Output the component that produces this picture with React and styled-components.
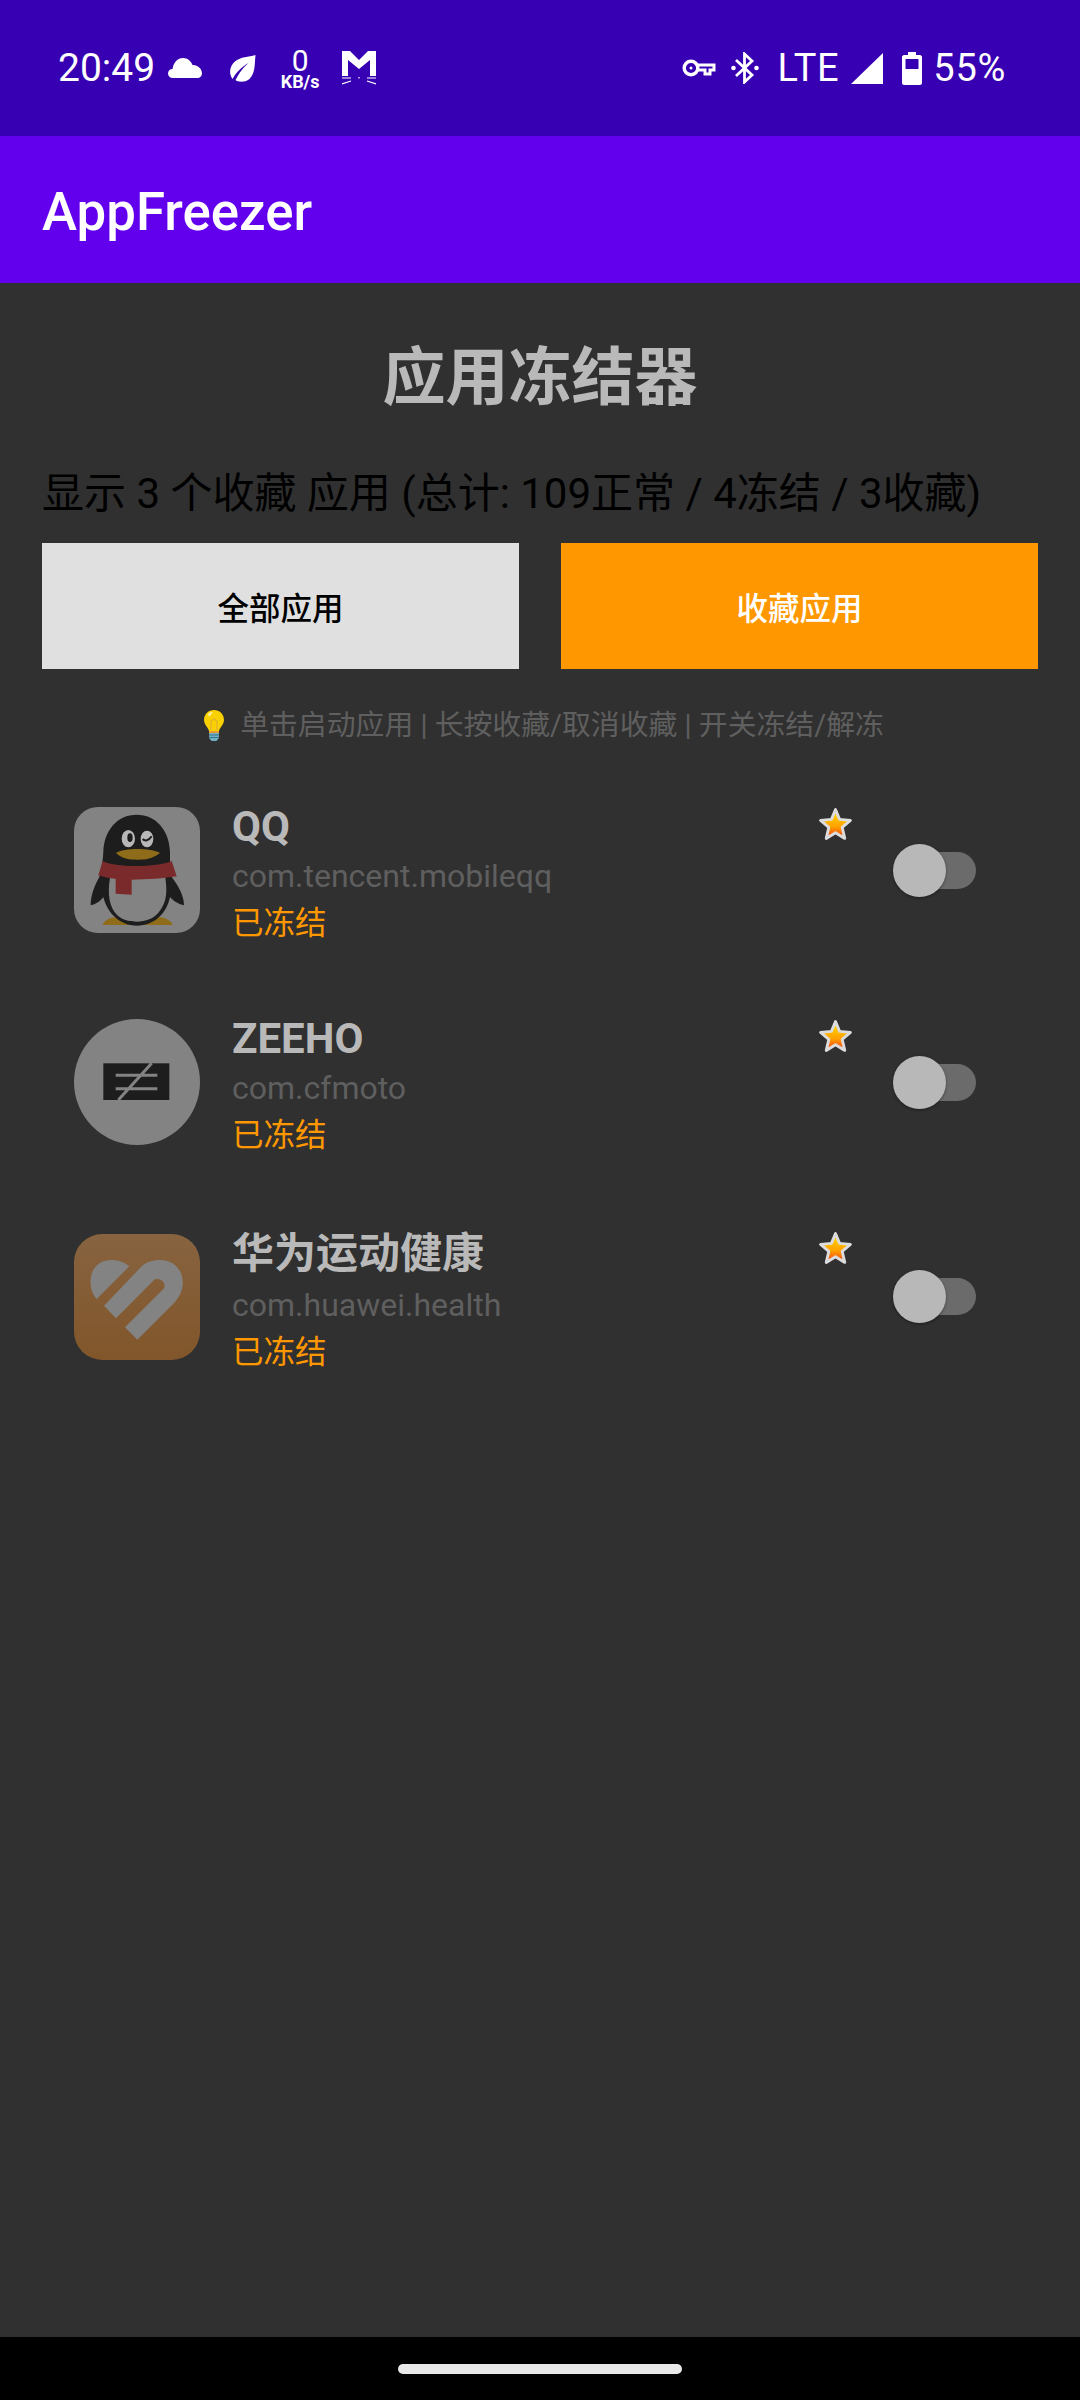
import styled, { createGlobalStyle } from 'styled-components';

const GlobalStyle = createGlobalStyle`
    html, body {
        margin: 0;
        padding: 0;
        background: #303030;
    }
    * {
        box-sizing: border-box;
    }
`;

const FONT = `Roboto, "Noto Sans CJK SC", sans-serif`;

const apps = [
    { name: 'QQ', pkg: 'com.tencent.mobileqq', icon: 'qq' },
    { name: 'ZEEHO', pkg: 'com.cfmoto', icon: 'zeeho' },
    { name: '华为运动健康', pkg: 'com.huawei.health', icon: 'health', tall: true },
];

const Cloud = () => (
    <svg width="34" height="20" viewBox="0 0 34 20">
        <path fill="#fff" d="M5 20C2 20 0 18 0 15.500C0 12.800 2 11 4.500 11C5.500 4.500 9.500 0 15 0C19.500 0 23 2.800 24.500 7C25 7 26 7 26.500 7.200C30.500 7.800 34 11 34 15.500C34 18 32 20 29.500 20Z" />
    </svg>
);

const Leaf = () => (
    <svg width="27" height="27" viewBox="0 0 26 27">
        <path fill="#fff" d="M26 0C25 9 26 18 20 24C15 28 8 27 6 25C10 18 13 13 19 8C12 12 7 17 3 24C-1 18 0 11 6 6C11 2 19 2 26 0Z" />
    </svg>
);

const CatMail = () => (
    <svg width="34" height="34" viewBox="0 0 34 34">
        <path fill="#fff" d="M0 0H8L17 9L26 0H34V25H28V9L17 18L6 9V25H0Z" />
        <path stroke="#fff" strokeWidth="1.200" fill="none" d="M0 27H9M0 33L9 30M25 27H34M25 30L34 33M17 26V27.500" />
    </svg>
);

const KeyIcon = () => (
    <svg width="34" height="18" viewBox="0 0 34 18">
        <circle cx="9" cy="9" r="6.800" fill="none" stroke="#fff" strokeWidth="3.400" />
        <circle cx="9" cy="9" r="1.500" fill="#fff" />
        <path fill="none" stroke="#fff" strokeWidth="3" d="M15 6H32V11H28V15H23V11H15" />
    </svg>
);

const BluetoothIcon = () => (
    <svg width="28" height="32" viewBox="0 0 28 32">
        <path fill="none" stroke="#fff" strokeWidth="2.800" d="M5 8L21 23L13.500 30V2L21 9L5 24" />
        <circle cx="2.500" cy="16" r="2.300" fill="#fff" />
        <circle cx="25.500" cy="16" r="2.300" fill="#fff" />
    </svg>
);

const SignalIcon = () => (
    <svg width="32" height="31" viewBox="0 0 32 31">
        <path fill="#fff" d="M0 31L32 0V31Z" />
    </svg>
);

const BatteryIcon = () => (
    <svg width="20" height="33" viewBox="0 0 20 33">
        <path fill="#fff" fillRule="evenodd" d="M6 0H14V3H18C19 3 20 4 20 5V31C20 32 19 33 18 33H2C1 33 0 32 0 31V5C0 4 1 3 2 3H6ZM3.500 7V17H16.500V7Z" />
    </svg>
);

const StarIcon = ({ id }) => (
    <svg width="35" height="34" viewBox="0 0 34 33">
        <defs>
            <linearGradient id={id} x1="0" y1="0" x2="0" y2="1">
                <stop offset="0.150" stopColor="#ffd000" />
                <stop offset="0.600" stopColor="#ffa000" />
                <stop offset="0.900" stopColor="#f4500f" />
            </linearGradient>
        </defs>
        <path
            fill={`url(#${id})`}
            stroke="#dcdcdc"
            strokeWidth="2.800"
            strokeLinejoin="round"
            d="M17 2.500L21 12L31.500 13L23.500 19.800L26 30.500L17 25L8 30.500L10.500 19.800L2.500 13L13 12Z"
        />
    </svg>
);

const BulbIcon = () => (
    <svg width="20" height="31" viewBox="0 0 20 31">
        <path fill="#f9d000" d="M10 0C4.500 0 0 4 0 10C0 14.500 4 17 5 21H15C16 17 20 14.500 20 10C20 4 15.500 0 10 0Z" />
        <path fill="#fff3a0" d="M4 4C6 2 8 2 9 2L5 7Z" />
        <path fill="none" stroke="#e0b030" strokeWidth="1.200" d="M7 20V11L10 9L13 11V20" />
        <rect x="5" y="21" width="10" height="2" fill="#e89a2c" />
        <path fill="#6fb0c4" d="M5 23H15V28L12.500 31H7.500L5 28Z" />
        <path stroke="#3e7386" strokeWidth="1" d="M5 25H15M5 27.500H15" />
    </svg>
);

const QQIcon = () => (
    <svg width="126" height="126" viewBox="0 0 378 378">
        <rect width="378" height="378" rx="72" fill="#838383" />
        <path fill="#8e6c1a" d="M86 354C90 340 110 330 130 330H250C270 330 292 340 296 354Z" />
        <path fill="#1d1d1d" d="M188 23C130 23 90 70 88 135C87 150 86 165 82 180L76 210C62 235 50 265 50 295C65 292 80 282 88 270C100 320 140 356 188 356C240 356 278 320 288 270C298 282 315 292 330 295C330 265 312 235 293 210L288 180C288 150 288 140 288 135C286 70 246 23 188 23Z" />
        <path fill="#838383" d="M108 212C100 260 105 300 130 325C150 342 170 344 188 344C215 344 240 335 255 315C280 285 280 250 273 205Z" />
        <path fill="#7b2a2b" d="M86 162C120 182 250 182 293 162L308 208C270 214 220 218 173 218V263L125 260V215C105 214 90 210 73 205Z" />
        <path fill="#8e6c1a" d="M126 138C150 122 230 122 258 138C235 156 215 158 190 158C165 158 145 156 126 138Z" />
        <ellipse cx="163" cy="95" rx="20" ry="26" fill="#b8b8b8" />
        <ellipse cx="168" cy="92" rx="8" ry="13" fill="#1d1d1d" />
        <ellipse cx="219" cy="96" rx="19" ry="25" fill="#b8b8b8" />
        <path fill="none" stroke="#1d1d1d" strokeWidth="6" d="M206 96C212 103 224 102 233 88" />
    </svg>
);

const ZeehoIcon = () => (
    <svg width="126" height="126" viewBox="0 0 378 378">
        <circle cx="189" cy="189" r="189" fill="#838383" />
        <rect x="88" y="133" width="198" height="110" fill="#1d1d1d" />
        <path stroke="#838383" strokeWidth="9" d="M125 169H250M125 209H250M233 133L133 243" />
    </svg>
);

const HealthIcon = () => (
    <svg width="126" height="126" viewBox="0 0 378 378">
        <defs>
            <linearGradient id="healthBg" x1="0" y1="0" x2="0" y2="1">
                <stop offset="0" stopColor="#876340" />
                <stop offset="1" stopColor="#81562a" />
            </linearGradient>
        </defs>
        <rect width="378" height="378" rx="85" fill="url(#healthBg)" />
        <path fill="#838383" d="M166 97L68 195C36 160 42 78 113 78C135 78 152 85 166 97Z" />
        <path fill="#838383" d="M153 280L190 317L300 207C350 155 325 78 258 78C235 78 215 85 203 97L90 215L126 253L238 140C255 125 282 150 268 165Z" />
    </svg>
);

const ICONS = { qq: QQIcon, zeeho: ZeehoIcon, health: HealthIcon };

export default function App() {
    return (
        <Page>
            <GlobalStyle />
            <StatusBar>
                <StatusGroup>
                    <Clock>20:49</Clock>
                    <StatusSlot $left={13}><Cloud /></StatusSlot>
                    <StatusSlot $left={27}><Leaf /></StatusSlot>
                    <NetSpeed>
                        <NetValue>0</NetValue>
                        <NetUnit>KB/s</NetUnit>
                    </NetSpeed>
                    <StatusSlot $left={22}><CatMail /></StatusSlot>
                </StatusGroup>
                <StatusGroup>
                    <StatusSlot><KeyIcon /></StatusSlot>
                    <StatusSlot $left={15}><BluetoothIcon /></StatusSlot>
                    <StatusText $left={19}>LTE</StatusText>
                    <StatusSlot $left={12}><SignalIcon /></StatusSlot>
                    <StatusSlot $left={19}><BatteryIcon /></StatusSlot>
                    <StatusText $left={11}>55%</StatusText>
                </StatusGroup>
            </StatusBar>
            <AppBar>AppFreezer</AppBar>
            <Content>
                <Title>应用冻结器</Title>
                <Summary>显示 3 个收藏 应用 (总计: 109正常 / 4冻结 / 3收藏)</Summary>
                <Tabs>
                    <TabButton type="button">全部应用</TabButton>
                    <TabButton type="button" $active>收藏应用</TabButton>
                </Tabs>
                <Hint>
                    <BulbIcon />
                    <span>单击启动应用 | 长按收藏/取消收藏 | 开关冻结/解冻</span>
                </Hint>
                <AppList>
                    {apps.map((app) => {
                        const Icon = ICONS[app.icon];
                        return (
                            <AppRow key={app.pkg}>
                                <IconBox><Icon /></IconBox>
                                <AppInfo>
                                    <AppName $tall={app.tall}>{app.name}</AppName>
                                    <AppPackage>{app.pkg}</AppPackage>
                                    <AppState>已冻结</AppState>
                                </AppInfo>
                                <StarBox><StarIcon id={`star-${app.icon}`} /></StarBox>
                                <Switch>
                                    <SwitchThumb />
                                </Switch>
                            </AppRow>
                        );
                    })}
                </AppList>
            </Content>
            <NavBar>
                <NavPill />
            </NavBar>
        </Page>
    );
}

const Page = styled.div`
    width: 1080px;
    height: 2400px;
    display: flex;
    flex-direction: column;
    font-family: ${FONT};
    background: #303030;
    overflow: hidden;
`;

const StatusBar = styled.div`
    height: 136px;
    flex: none;
    padding: 0 74px 0 58px;
    display: flex;
    justify-content: space-between;
    align-items: center;
    background: #3700b3;
    color: #fff;
`;

const StatusGroup = styled.div`
    display: flex;
    align-items: center;
`;

const StatusSlot = styled.div`
    display: flex;
    margin-left: ${(props) => props.$left || 0}px;
`;

const Clock = styled.span`
    font-size: 39px;
    line-height: 44px;
`;

const StatusText = styled.span`
    margin-left: ${(props) => props.$left || 0}px;
    font-size: 38px;
    line-height: 44px;
    letter-spacing: 0.700px;
`;

const NetSpeed = styled.div`
    width: 40px;
    margin-left: 24px;
    display: flex;
    flex-direction: column;
    align-items: center;
`;

const NetValue = styled.span`
    font-size: 30px;
    line-height: 26px;
`;

const NetUnit = styled.span`
    font-size: 18px;
    line-height: 15px;
    font-weight: 700;
    white-space: nowrap;
`;

const AppBar = styled.div`
    height: 147px;
    flex: none;
    padding: 4px 42px 0;
    display: flex;
    align-items: center;
    background: #6200ee;
    color: #fff;
    font-size: 52.800px;
    font-weight: 500;
`;

const Content = styled.main`
    flex: 1;
    padding: 42px 42px 0;
    display: flex;
    flex-direction: column;
`;

const Title = styled.h1`
    margin: 15px 0 0;
    text-align: center;
    font-size: 63px;
    line-height: 76px;
    font-weight: 700;
    color: #b9b9b9;
`;

const Summary = styled.div`
    margin: 48px 0 19px;
    font-size: 42px;
    line-height: 60px;
    color: #000;
    white-space: nowrap;
`;

const Tabs = styled.div`
    display: flex;
    gap: 42px;
`;

const TabButton = styled.button`
    flex: 1;
    height: 126px;
    border: none;
    border-radius: 0;
    font-family: inherit;
    font-size: 31.500px;
    font-weight: 500;
    color: ${(props) => (props.$active ? '#fff' : '#000')};
    background: ${(props) => (props.$active ? '#ff9800' : '#e0e0e0')};
`;

const Hint = styled.div`
    margin: 38px 0 0 8px;
    display: flex;
    justify-content: center;
    align-items: center;
    gap: 16px;
    font-size: 28.875px;
    line-height: 36px;
    color: #5f5f5f;
`;

const AppList = styled.div`
    margin-top: 48px;
    padding: 0 62px 0 32px;
    display: flex;
    flex-direction: column;
    gap: 54px;
`;

const AppRow = styled.div`
    display: flex;
    align-items: center;
`;

const IconBox = styled.div`
    width: 126px;
    height: 126px;
    flex: none;
    margin-right: 32px;

    & > svg {
        display: block;
    }
`;

const AppInfo = styled.div`
    flex: 1;
    margin-top: 10px;
    display: flex;
    flex-direction: column;
`;

const AppName = styled.div`
    font-size: 42px;
    line-height: ${(props) => (props.$tall ? '57px' : '52px')};
    font-weight: 700;
    color: #b9b9b9;
`;

const AppPackage = styled.div`
    font-size: 32px;
    line-height: 46px;
    color: #5f5f5f;
`;

const AppState = styled.div`
    font-size: 31.500px;
    line-height: 50px;
    color: #ff9800;
`;

const StarBox = styled.div`
    align-self: flex-start;
    margin: 16px 40px 0 0;

    & > svg {
        display: block;
    }
`;

const Switch = styled.div`
    position: relative;
    width: 76px;
    height: 37px;
    margin-left: 7px;
    border-radius: 19px;
    background: #6b6b6b;
`;

const SwitchThumb = styled.div`
    position: absolute;
    left: -7px;
    top: -8px;
    width: 53px;
    height: 53px;
    border-radius: 50%;
    background: #b8b8b8;
    box-shadow: 0 1px 3px rgba(0, 0, 0, 0.4);
`;

const NavBar = styled.div`
    height: 63px;
    flex: none;
    display: flex;
    justify-content: center;
    padding-top: 27px;
    background: #000;
`;

const NavPill = styled.div`
    width: 284px;
    height: 10px;
    border-radius: 5px;
    background: #e8e8e8;
`;
